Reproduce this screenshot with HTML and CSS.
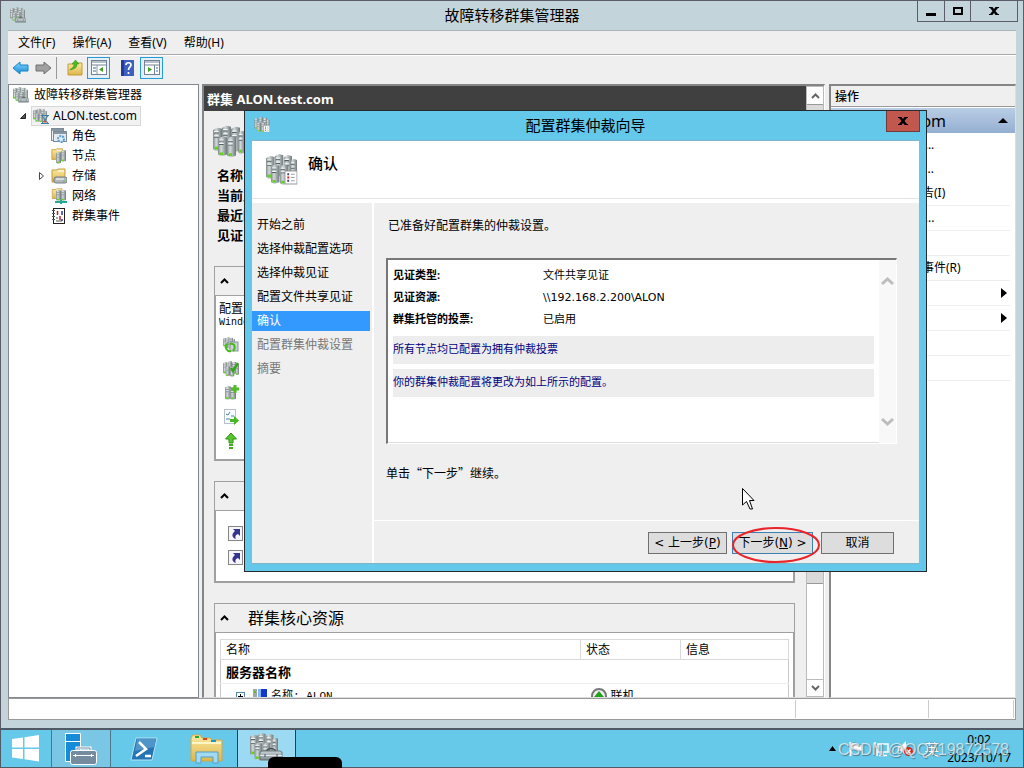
FILE: index.html
```html
<!DOCTYPE html>
<html lang="zh-CN">
<head>
<meta charset="utf-8">
<title>故障转移群集管理器</title>
<link rel="stylesheet" href="styles.css">
</head>
<body>
<svg class="sprite" aria-hidden="true">
  <defs>
    <linearGradient id="metal" x1="0" x2="1" y1="0" y2="0"><stop offset="0" stop-color="#7f898b"/><stop offset=".35" stop-color="#d3d9da"/><stop offset="1" stop-color="#6d7779"/></linearGradient>
    <linearGradient id="steel" x1="0" x2="0" y1="0" y2="1"><stop offset="0" stop-color="#c9d1d4"/><stop offset="1" stop-color="#7f8c93"/></linearGradient>
    <linearGradient id="gold" x1="0" x2="0" y1="0" y2="1"><stop offset="0" stop-color="#fbe9a2"/><stop offset="1" stop-color="#dfb64c"/></linearGradient>
    <linearGradient id="sky" x1="0" x2="0" y1="0" y2="1"><stop offset="0" stop-color="#8bd4fa"/><stop offset="1" stop-color="#128bd8"/></linearGradient>
    <symbol id="tower" viewBox="0 0 8 20" preserveAspectRatio="none"><path d="M0 2 4 0 8 1V18L3 20 0 18Z" fill="url(#metal)"/><path d="M1 4.500H5M1 8H5" stroke="#566063"/><path d="M1 3.500H5M1 7H5" stroke="#f4f6f6"/><rect x="1.500" y="16" width="3" height="2.500" fill="#5fd416"/></symbol>
    <symbol id="cluster" viewBox="0 0 32 32"><use href="#tower" x="0" y="2" width="9" height="24"/><use href="#tower" x="9" y="0" width="9" height="24"/><use href="#tower" x="18" y="1" width="9" height="26"/><use href="#tower" x="25" y="5" width="7" height="24"/><use href="#tower" x="5" y="11" width="9" height="20"/><use href="#tower" x="14" y="11" width="9" height="21"/></symbol>
    <symbol id="case" viewBox="0 0 24 14"><path d="M8 4V3Q12 0 16 3V4" fill="none" stroke="#465156" stroke-width="1.500"/><path d="M1 5 3 4H21L23 5V13H1Z" fill="url(#steel)" stroke="#58646a" stroke-width=".8"/><path d="M1 8.500H23" stroke="#e3e8ea"/><path d="M6 7V10M18 7V10" stroke="#465156"/></symbol>
    <symbol id="list" viewBox="0 0 14 15"><rect x=".5" y=".5" width="13" height="14" fill="#fff" stroke="#929292"/><path d="M3 4H5M3 11H5" stroke="#446" stroke-width="2"/><path d="M3 7.500H5" stroke="#e01818" stroke-width="2"/><path d="M7 4H11M7 7.500H11M7 11H11" stroke="#9697a3"/></symbol>
    <symbol id="folder" viewBox="0 0 16 16"><path d="M1 2H6L7 1H14V14H1Z" fill="url(#gold)" stroke="#c59b3c"/><path d="M7 3H13" stroke="#fff"/></symbol>
    <symbol id="manager" viewBox="0 0 16 16"><use href="#cluster" width="15" height="15"/><use href="#case" x="5" y="9" width="11" height="7"/></symbol>
    <symbol id="wizard" viewBox="0 0 32 32"><use href="#cluster" width="32" height="31"/><use href="#list" x="19" y="16" width="13" height="15"/></symbol>
    <symbol id="chev" viewBox="0 0 9 6"><path d="M1 5 4.500 1.500 8 5" fill="none" stroke="currentColor" stroke-width="2"/></symbol>
    <symbol id="x" viewBox="0 0 10 8"><path d="M0 0H3.500L5 2 6.500 0H10V1H9L6.500 4 9 7H10V8H6.500L5 6 3.500 8H0V7H1L3.500 4 1 1H0Z"/></symbol>
    <symbol id="link" viewBox="0 0 15 15"><rect x=".5" y=".5" width="14" height="14" fill="#f5f5fb" stroke="#858585"/><path d="M5 3H12V10L10 8C7 9 7 11 8 13 4 12 3 8 7 5Z" fill="#34348e"/></symbol>
    <symbol id="pane" viewBox="0 0 16 15"><rect x=".5" y=".5" width="15" height="14" fill="#fff" stroke="#738294"/><path d="M1 2H15M1 5H15" stroke="#718397"/><path d="M6 5V14" stroke="#8896a5"/></symbol>
  </defs>
</svg>
<div class="desktop">
  <main class="window">
    <header class="titlebar">
      <svg class="i16"><use href="#manager"/></svg>
      <h1>故障转移群集管理器</h1>
      <div class="controls">
        <button aria-label="最小化"><svg width="10" height="10"><path d="M0 7H10V10H0Z"/></svg></button>
        <button aria-label="最大化"><svg width="10" height="8"><path d="M1 1H9V7H1Z" fill="none" stroke="#000" stroke-width="2"/></svg></button>
        <button class="close" aria-label="关闭"><svg width="10" height="8"><use href="#x"/></svg></button>
      </div>
    </header>
    <div class="client">
      <nav class="menu"><button>文件(F)</button><button>操作(A)</button><button>查看(V)</button><button>帮助(H)</button></nav>
      <div class="toolbar">
        <button aria-label="后退"><svg width="17" height="14"><path d="M1 7 8 1V4H16V10H8V13Z" fill="url(#sky)" stroke="#1584c8"/></svg></button>
        <button aria-label="前进"><svg width="17" height="14"><path d="M16 7 9 1V4H1V10H9V13Z" fill="#a0a0a0" stroke="#707070"/></svg></button>
        <i class="sep"></i>
        <button class="up" aria-label="上一级"><svg class="i16"><path d="M1 4H6L7 3H15V15H1Z" fill="url(#gold)" stroke="#c59b3c"/><path d="M3 10C4 8 7 8 7 4H5L8.500 0 12 4H10C10 9 6 9 3 10Z" fill="#4fb81d" stroke="#348514" stroke-width=".5"/></svg></button>
        <button class="on" aria-label="控制台树"><svg width="16" height="15"><use href="#pane"/><path d="M12 7V12L8 9.500Z" fill="#3da021"/><path d="M2 8H5M2 11H5" stroke="#3c69a5"/></svg></button>
        <button class="help" aria-label="帮助"><svg width="13" height="16"><rect width="13" height="16" fill="#3e5fc0"/><path d="M0 0H3V16H0Z" fill="#263b94"/><path d="M5 5C5 2 10 2 10 5 10 7 7.500 7 7.500 10M7.500 12V14" fill="none" stroke="#fff" stroke-width="1.700"/></svg></button>
        <button class="on" aria-label="操作窗格"><svg width="16" height="15"><rect x=".5" y=".5" width="15" height="14" fill="#fff" stroke="#738294"/><path d="M1 2H15M1 5H15M10.500 5V14" stroke="#718397"/><path d="M4 7V12L8 9.500Z" fill="#3da021"/><path d="M12 8H14M12 11H14" stroke="#3c69a5"/></svg></button>
      </div>
      <div class="panes">
        <aside class="tree">
          <div class="node root"><svg class="i16"><use href="#manager"/></svg><span>故障转移群集管理器</span></div>
          <div class="node cl"><svg class="tw" width="8" height="8"><path d="M6.500 1.500V6.500H1.500Z" fill="#555" stroke="#222"/></svg><div class="sel"><svg class="i16"><use href="#cluster" width="14" height="15"/><path d="M8 7.500H16M8 15.500H16M9 8 15 15M15 8 9 15" stroke="#357fae" fill="none"/><path d="M10 14.500H14L12 12Z" fill="#c54a21"/></svg><span>ALON.test.com</span></div></div>
          <div class="node sub"><i class="tw"></i><svg class="i16"><rect x=".5" y=".5" width="12" height="12" fill="#eef1f3" stroke="#7c8b96"/><path d="M1 2H12" stroke="#8696a2" stroke-width="2"/><rect x="2.500" y="3.500" width="13" height="10" fill="#e4eaef" stroke="#7c8b96"/><path d="M3 5H15" stroke="#8696a2" stroke-width="2"/><circle cx="10" cy="11" r="3" fill="#d8edf9" stroke="#5d9cc8" stroke-width="2" stroke-dasharray="2 1"/></svg><span>角色</span></div>
          <div class="node sub"><i class="tw"></i><svg class="i16"><use href="#folder" width="13" height="13"/><use href="#tower" x="5" y="4" width="5" height="12"/><use href="#tower" x="10" y="2" width="5" height="12"/></svg><span>节点</span></div>
          <div class="node sub"><svg class="tw" width="8" height="10"><path d="M1.500 1.500V8.500L5.500 5Z" fill="#fff" stroke="#444"/></svg><svg class="i16"><use href="#folder"/><rect x="3" y="9" width="13" height="6" rx="2" fill="#b1b9bc" stroke="#737f84"/><path d="M5 11H13" stroke="#fff"/><path d="M12 13H14" stroke="#55c620"/></svg><span>存储</span></div>
          <div class="node sub"><i class="tw"></i><svg class="i16"><use href="#folder" width="13" height="12"/><use href="#tower" x="5" y="2" width="5" height="11"/><use href="#tower" x="10" y="2" width="5" height="11"/><path d="M4 14H16M10 12V16" stroke="#26a899" stroke-width="2"/></svg><span>网络</span></div>
          <div class="node sub"><i class="tw"></i><svg class="i16"><rect x="2.500" y=".5" width="11" height="15" fill="#fff" stroke="#222"/><path d="M1 2.500H4M1 5.500H4M1 8.500H4M1 11.500H4M5 13H11M5 10H7" stroke="#555"/><path d="M6.500 3V7M9 8V12" stroke="#bd2525" stroke-width="1.500"/><path d="M11 3V7M10 12H12" stroke="#3434a8" stroke-width="1.500"/></svg><span>群集事件</span></div>
        </aside>
        <section class="center">
          <div class="page">
            <h2>群集 ALON.test.com</h2>
            <div class="overview">
              <svg width="32" height="33"><use href="#cluster"/></svg>
              <ul><li>名称</li><li>当前主</li><li>最近的</li><li>见证</li></ul>
            </div>
            <section class="card config">
              <h3><svg width="9" height="6"><use href="#chev"/></svg></h3>
              <div class="body">
                <p>配置</p><p class="mono">Windows</p>
                <a href="#"><svg class="i16"><use href="#cluster" width="12" height="12"/><rect x="7" y="5" width="8" height="9" fill="#ccd3d4" stroke="#879294"/><path d="M4 7C1 10 4 15 8 14M7 7C12 6 13 11 10 14" fill="none" stroke="#46b91b" stroke-width="2"/></svg>配</a>
                <a href="#"><svg class="i16"><use href="#cluster"/><path d="M8 7 10 10 15 2" fill="none" stroke="#36a41b" stroke-width="2.500"/></svg>验</a>
                <a href="#"><svg class="i16"><use href="#tower" x="2" y="1" width="6" height="14"/><use href="#tower" x="7" y="2" width="6" height="13"/><path d="M12 0V8M8 4H16" stroke="#4fbe24" stroke-width="3"/></svg>添</a>
                <a href="#"><svg class="i16"><rect x="1.500" y=".5" width="11" height="14" fill="#fafcff" stroke="#b8bfca"/><path d="M3 5 5 6 7 3M3 10H7M8 7H11" fill="none" stroke="#3984bc"/><path d="M7 10H11V7L16 11.500 11 16V13H7Z" fill="#49b722"/></svg>复</a>
                <a href="#"><svg class="i16"><path d="M8 0 13.500 6H10V10H6V6H2.500Z" fill="#56c72c" stroke="#309216"/><path d="M6 12H10M6 15H10" stroke="#43a91e" stroke-width="2"/></svg>群</a>
              </div>
            </section>
            <section class="card nav">
              <h3><svg width="9" height="6"><use href="#chev"/></svg></h3>
              <div class="body"><a href="#" aria-label="角色"><svg width="15" height="15"><use href="#link"/></svg></a><a href="#" aria-label="节点"><svg width="15" height="15"><use href="#link"/></svg></a></div>
            </section>
            <section class="card core">
              <h3><svg width="9" height="6"><use href="#chev"/></svg><span>群集核心资源</span></h3>
              <div class="body">
                <table>
                  <thead><tr><th class="c1">名称</th><th class="c2">状态</th><th>信息</th></tr></thead>
                  <tbody>
                    <tr class="grp"><td colspan="3">服务器名称</td></tr>
                    <tr class="res"><td><div><svg width="9" height="9"><rect x=".5" y=".5" width="8" height="8" fill="#fff" stroke="#5688ab"/><path d="M2 4.500H7M4.500 2V7" stroke="#000"/></svg><svg class="pc" width="14" height="14"><rect width="4" height="12" fill="#a0a7a5"/><path d="M1 3H3" stroke="#5ebf22" stroke-width="2"/><rect x="5" width="9" height="9" fill="#1237cb"/><path d="M5 0H8V9H5Z" fill="#81b8ed"/></svg><span class="mono name">名称: ALON</span></div></td><td><div><svg class="i16"><circle cx="8" cy="8" r="7" fill="#eee" stroke="#777" stroke-width="2"/><path d="M8 3 13 9H3Z" fill="#23a11e"/></svg>联机</div></td><td></td></tr>
                  </tbody>
                </table>
              </div>
            </section>
          </div>
          <div class="scroll"><button aria-label="向上滚动"><svg width="9" height="6"><use href="#chev"/></svg></button><i class="thumb"></i><button class="down" aria-label="向下滚动"><svg width="9" height="6"><use href="#chev"/></svg></button></div>
        </section>
        <aside class="actions">
          <h2>操作</h2>
          <h3><span>ALON.test.com</span><svg width="10" height="5"><path d="M0 5 5 0 10 5Z"/></svg></h3>
          <ul>
            <li class="plain">配置角色(R)...</li><li class="plain">验证群集(V)...</li><li>查看验证报告(I)</li><li>添加节点(A)...</li><li>关闭群集</li><li>重置最近的事件(R)</li>
            <li>更多操作<svg width="6" height="10"><path d="M0 0 6 5 0 10Z"/></svg></li><li>查看<svg width="6" height="10"><path d="M0 0 6 5 0 10Z"/></svg></li><li>刷新</li><li>属性</li>
          </ul>
        </aside>
      </div>
      <footer class="status"><i></i><i></i><i></i></footer>
    </div>
  </main>

  <footer class="taskbar">
    <button class="start" aria-label="开始"><svg width="28" height="27"><path d="M0 4 11 2.500V12.500H0ZM12.500 2.300 27 0V12.500H12.500ZM0 14H11V24L0 22.500ZM12.500 14H27V26.500L12.500 24.300Z" fill="#fff"/></svg></button>
    <button class="run" aria-label="服务器管理器"><svg width="34" height="34"><path d="M1.500 1.500H16.500V29.500H1.500Z" fill="#168bd8" stroke="#fff"/><path d="M1 9.500H16" stroke="#fff"/><path d="M13 19V16H26V19" fill="none" stroke="#fff" stroke-width="3"/><path d="M13 19V16H26V19" fill="none" stroke="#72889b"/><rect x="6.500" y="18.500" width="26" height="14" rx="2" fill="#758b9f" stroke="#fff"/><path d="M9 23.500H30M11.500 22V25M27.500 22V25" stroke="#fff"/></svg></button>
    <button class="ps" aria-label="PowerShell"><svg width="28" height="24"><path d="M6 1H27L22 23H1Z" fill="#2575b5" stroke="#b5e4f5"/><path d="M7 2H26L24 10 5 14Z" fill="#77b8df" opacity=".5"/><path d="M9 5 16 12 6 19M15 19H21" fill="none" stroke="#fff" stroke-width="2.500"/></svg></button>
    <button class="ex" aria-label="文件资源管理器"><svg width="34" height="30"><path d="M1 4 3 1H10L12 4H20L22 6H32V27H1Z" fill="url(#gold)" stroke="#d1a849"/><path d="M5 2H9V4H5Z" fill="#28a636"/><path d="M13 4H17V6H13Z" fill="#d84523"/><path d="M21 6H26V8H21Z" fill="#1994d1"/><path d="M2 9H31" stroke="#fff6c5" stroke-width="2"/><path d="M6 29V18H28V29H23V23H11V29Z" fill="#a2d9f3" stroke="#549fc4"/></svg></button>
    <button class="run active" aria-label="故障转移群集管理器"><svg width="34" height="32"><use href="#cluster" width="28" height="28"/><use href="#case" x="9" y="14" width="24" height="14"/></svg></button>
    <i class="mask"></i>
    <div class="tray">
      <svg width="7" height="5"><path d="M0 5 3.500 0 7 5Z"/></svg>
      <svg class="flag" width="15" height="16"><path d="M2.500 1V15" stroke="#fff" stroke-width="2"/><path d="M3 2H8L10 4H14V10H8L7 9H3Z" fill="#fff" stroke="#587b89" stroke-width=".5"/></svg>
      <svg class="net" width="16" height="16"><rect x="5" y="3" width="10" height="8" fill="none" stroke="#fff" stroke-width="1.500"/><path d="M10 11V14M6 14.500H14M2 1V6H4V15" fill="none" stroke="#fff" stroke-width="1.500"/></svg>
      <svg class="snd" width="16" height="16"><path d="M0 5H3L8 0V14L3 10H0Z" fill="#fff"/><circle cx="10.500" cy="10.500" r="4.500" fill="#d9261c"/><path d="M8.500 8.500 12.500 12.500M12.500 8.500 8.500 12.500" stroke="#fff" stroke-width="1.500"/></svg>
      <span class="ime">英</span>
      <time>0:02<br>2023/10/17</time>
      <span class="brand">CSDN @QQ719872578</span>
    </div>
  </footer>

  <section class="dialog" role="dialog" aria-labelledby="dt">
    <header><svg class="i16"><use href="#wizard"/></svg><h2 id="dt">配置群集仲裁向导</h2><button aria-label="关闭"><svg width="10" height="8"><use href="#x"/></svg></button></header>
    <div class="inner">
      <div class="banner"><svg width="33" height="32"><use href="#wizard"/></svg><h3>确认</h3></div>
      <div class="cols">
        <ol><li>开始之前</li><li>选择仲裁配置选项</li><li>选择仲裁见证</li><li>配置文件共享见证</li><li class="cur">确认</li><li class="off">配置群集仲裁设置</li><li class="off">摘要</li></ol>
        <div class="pagearea">
          <div class="text">
            <p class="intro">已准备好配置群集的仲裁设置。</p>
            <div class="report">
              <div class="rows">
                <dl><dt>见证类型:</dt><dd>文件共享见证</dd><dt>见证资源:</dt><dd class="path">\\192.168.2.200\ALON</dd><dt>群集托管的投票:</dt><dd>已启用</dd></dl>
                <p>所有节点均已配置为拥有仲裁投票</p><p>你的群集仲裁配置将更改为如上所示的配置。</p>
              </div>
              <div class="bar"><svg width="13" height="10"><path d="M1 8 6.500 3 12 8" /></svg><svg width="13" height="10"><path d="M1 2 6.500 7 12 2"/></svg></div>
            </div>
            <p class="go">单击“下一步”继续。</p>
          </div>
          <div class="buttons"><button>&lt; 上一步(<u>P</u>)</button><button class="next">下一步(<u>N</u>) &gt;</button><button class="cancel">取消</button></div>
        </div>
      </div>
    </div>
    <svg class="ring" width="90" height="38"><ellipse cx="45" cy="19" rx="43" ry="17" fill="none" stroke="#e9242b" stroke-width="2"/></svg>
    <svg class="pointer" width="13" height="22"><path d="M.5.500V17L4.500 13.500 8 21H10.500L7.500 12.500H12Z" fill="#fff" stroke="#000"/></svg>
  </section>
</div>
</body>
</html>
```
FILE: styles.css
```css
* { box-sizing: border-box; margin: 0; padding: 0; }
body { font: 12px/20px "Noto Sans", "Noto Sans CJK SC", sans-serif; color: #000; }
button { font: inherit; border: 0; background: none; color: inherit; display: flex; align-items: center; justify-content: center; }
svg { display: block; flex: none; }
h1, h2, h3 { font-size: 12px; font-weight: 400; }
ul, ol { list-style: none; }
.sprite { position: absolute; width: 0; height: 0; }
.i16 { width: 16px; height: 16px; }
.mono { font-family: "Liberation Mono", "Noto Sans CJK SC", monospace; font-size: 10px; }

.desktop { position: relative; height: 100vh; display: flex; flex-direction: column; overflow: hidden; }
.window { flex: 1; min-height: 0; display: flex; flex-direction: column; background: #c3d5da; border: 1px solid #5c5d69; border-bottom: 0; padding: 0 7px 8px; }
.titlebar { height: 29px; flex: none; display: grid; grid-template-columns: 1fr auto 1fr; align-items: center; line-height: 18px; padding-bottom: 1px; }
.titlebar > svg { margin-left: 2px; }
.titlebar h1 { font-size: 15px; }
.controls { justify-self: end; align-self: start; display: flex; border: 1px solid #5c5d69; border-top: 0; height: 21px; margin-right: -2px; }
.controls button { width: 26px; }
.controls button + button { border-left: 1px solid #5c5d69; }
.controls .close { width: 47px; }

.client { flex: 1; min-height: 0; display: flex; flex-direction: column; background: #efefef; border-top: 1px solid #aab5b9; }
.menu { height: 24px; flex: none; display: flex; gap: 17px; padding-left: 10px; border-bottom: 1px solid #a9a9a9; }
.toolbar { height: 29px; flex: none; display: flex; align-items: center; padding: 0 4px 5px; gap: 6px; border-top: 1px solid #fff; }
.sep { width: 1px; height: 22px; background: #999; margin-left: -2px; }
.up { margin-left: 4px; }
.on { width: 23px; height: 22px; border: 1px solid #269bd7; background: #e5f0f6; margin-left: -2px; }
.help { margin: 0 2px 0 5px; }

.panes { flex: 1; min-height: 0; display: flex; }
.tree { width: 191px; flex: none; background: #fff; border: 1px solid #828790; }
.node { height: 20px; display: flex; align-items: center; gap: 4px; }
.root { padding-left: 4px; gap: 5px; }
.cl { height: 21px; padding-left: 10px; }
.sel { height: 20px; display: flex; align-items: center; gap: 4px; background: #f2f2f2; border: 1px solid #d8d8d8; padding: 0 3px 0 1px; }
.tw { width: 8px; }
.sub { padding-left: 29px; gap: 5px; }

.center { flex: 1; min-width: 0; margin: 0 4px 0 3px; display: flex; background: #efefef; border: 2px solid #858585; border-right: 1px solid #fff; border-bottom: 1px solid #ddd; }
.page { flex: 1; min-width: 0; overflow: hidden; }
.page h2 { background: #404040; color: #fff; height: 25px; font-weight: 700; font-size: 13px; line-height: 26px; padding-left: 3px; }
.overview { padding: 14px 10px 0 9px; }
.overview ul { padding: 7px 0 1px 4px; font-size: 13px; font-weight: 700; }
.card { margin: 20px 11px 20px 10px; border: 1px solid #a0a0a0; }
.card h3 { height: 29px; display: flex; align-items: center; padding-left: 5px; gap: 19px; font-size: 16px; border-bottom: 1px solid #a0a0a0; }
.card .body { background: #fff; border: solid #a0a0a0; border-width: 0 1px 1px; }
.config .body { height: 164px; padding: 3px 3px; }
.config p { height: 19px; }
.config .mono { height: 15px; line-height: 10px; }
.config a { display: flex; align-items: center; gap: 5px; height: 24px; padding-left: 4px; color: #0b58a4; text-decoration: none; }
.nav .body { height: 71px; padding: 15px 0 0 12px; display: flex; flex-direction: column; gap: 9px; }
.core .body { padding: 6px 4px; }
table { width: 100%; border-collapse: collapse; table-layout: fixed; border: 1px solid #c8c8c8; line-height: 18px; }
th { font-weight: 400; text-align: left; height: 20px; padding-left: 5px; border: 1px solid #d9d9d9; }
.c1 { width: 360px; }
.c2 { width: 100px; }
.grp td { font-weight: 700; font-size: 13px; height: 24px; padding-left: 5px; border-bottom: 1px solid #eee; }
.res div { display: flex; align-items: center; gap: 4px; padding: 3px 10px; }
.res td:first-child div { padding-left: 15px; }
.pc { margin-left: 4px; }
.name { font-size: 11px; }
.scroll { width: 18px; display: flex; flex-direction: column; background: #fff; border: 1px solid #bbb; color: #666; }
.scroll button { height: 17px; flex: none; }
.thumb { height: 480px; background: #dadada; border: solid #999; border-width: 1px 0; }
.down { margin-top: auto; border-top: 1px solid #bbb; }
.down svg { transform: rotate(180deg); }

.actions { width: 187px; flex: none; background: #fff; border: 2px solid #858585; border-right: 1px solid #ddd; border-bottom: 1px solid #ddd; }
.actions h2 { height: 21px; line-height: 22px; background: #efefef; border-bottom: 1px solid #999; font-weight: 500; padding-left: 4px; }
.actions h3 { margin-top: 1px; height: 25px; display: flex; align-items: center; justify-content: space-between; padding: 0 7px 0 3px; font-size: 16px; background: linear-gradient(#b9cde5, #95afd2); }
.actions ul { margin-right: 5px; }
.actions li { height: 25px; line-height: 23px; padding: 0 3px 1px 31px; display: flex; align-items: center; justify-content: space-between; border-bottom: 1px solid #eee; }
.actions .plain { height: 24px; border: 0; }
.status { height: 22px; flex: none; background: #fff; border: 1px solid #999; display: flex; padding: 1px; }
.status i { border-right: 1px solid #ccc; width: 133px; }
.status i:first-child { flex: 1; }
.status i:last-child { width: 85px; }

.taskbar { position: relative; height: 40px; flex: none; display: flex; background: #66c9ea; border: solid #505a66; border-width: 2px 1px 1px; }
.taskbar button { flex: none; }
.start { width: 50px; }
.run { width: 60px; background: #79c7e4; border: solid #48788a; border-width: 0 1px; }
.ps { width: 65px; }
.ex { width: 61px; }
.active { width: 59px; background: #9bdaf2; border-color: #303c42; }
.mask { position: absolute; left: 267px; bottom: -1px; width: 74px; height: 11px; border-radius: 6px 6px 0 0; background: #000; }
.tray { position: relative; margin-left: auto; padding-right: 12px; display: flex; align-items: center; }
.flag { margin-left: 12px; }
.net { margin-left: 10px; }
.snd { margin-left: 9px; }
.ime { margin-left: 10px; font-size: 15px; color: #fff; text-shadow: 0 0 1px #223; }
.tray time { margin-left: 8px; text-align: center; line-height: 18px; }
.brand { position: absolute; right: 14px; top: 10px; font: 16px/20px "Liberation Sans", sans-serif; color: rgba(235, 243, 246, .75); text-shadow: 1px 1px 1px rgba(70, 90, 100, .7); white-space: nowrap; }

.dialog { position: absolute; left: 244px; top: 110px; width: 683px; border: 1px solid #252b2e; background: #64c8ea; padding: 0 7px 7px; }
.dialog header { height: 29px; display: grid; grid-template-columns: 1fr auto 1fr; align-items: center; line-height: 18px; padding-bottom: 1px; }
.dialog header > svg { margin-left: 2px; }
.dialog header h2 { font-size: 15px; }
.dialog header button { justify-self: end; align-self: start; width: 34px; height: 21px; background: #c2574d; border: 1px solid #703a38; border-top: 0; margin-right: -1px; }
.inner { border: solid #82b4c9; border-width: 1px 0; }
.banner { height: 58px; background: #fff; display: flex; padding: 13px; gap: 10px; }
.banner h3 { font-size: 15px; font-weight: 500; line-height: 18px; }
.cols { display: flex; background: #efefef; border-top: 4px solid #fff; box-shadow: 0 -1px #e4e4e4; }
.cols ol { width: 120px; flex: none; padding: 12px 2px 0 0; }
.cols li { height: 20px; margin-bottom: 4px; padding-left: 5px; }
.cols .cur { background: #3399ff; color: #fff; }
.cols .off { color: #777; }
.pagearea { flex: 1; min-width: 0; border-left: 2px solid #fff; }
.text { height: 317px; padding: 13px 22px 0 12px; }
.intro { padding-left: 2px; }
.report { margin-top: 22px; height: 186px; display: flex; background: #fff; border: 2px solid #777; border-right: 1px solid #fff; border-bottom: 1px solid #fff; box-shadow: inset -1px -1px #ddd; font-size: 11px; }
.rows { flex: 1; padding: 4px 5px 0 5px; }
dl { display: grid; grid-template-columns: 150px 1fr; line-height: 22px; margin-bottom: 6px; }
dt { font-weight: 700; }
.path { font-family: "DejaVu Sans", sans-serif; line-height: 24px; height: 22px; }
.rows p { height: 28px; line-height: 26px; background: #ededed; color: #000080; margin-bottom: 5px; }
.bar { width: 17px; background: #f8f8f8; display: flex; flex-direction: column; justify-content: space-between; padding: 16px 2px; }
.bar path { fill: none; stroke: #bdbdbd; stroke-width: 3; }
.go { margin-top: 19px; font-family: "Noto Sans CJK SC", sans-serif; }
.buttons { height: 43px; border-top: 1px solid #fff; padding: 11px 25px 0 0; display: flex; justify-content: flex-end; font-family: "DejaVu Sans", "Noto Sans CJK SC", sans-serif; }
.buttons button { height: 22px; width: 79px; background: #ddd; border: 1px solid #707070; white-space: nowrap; }
.buttons .next { width: 81px; margin: 0 8px 0 5px; border-color: #3c7fb1; }
.buttons .cancel { width: 73px; }
.ring { position: absolute; right: 105px; bottom: 7px; }
.pointer { position: absolute; left: 497px; top: 377px; }
```
